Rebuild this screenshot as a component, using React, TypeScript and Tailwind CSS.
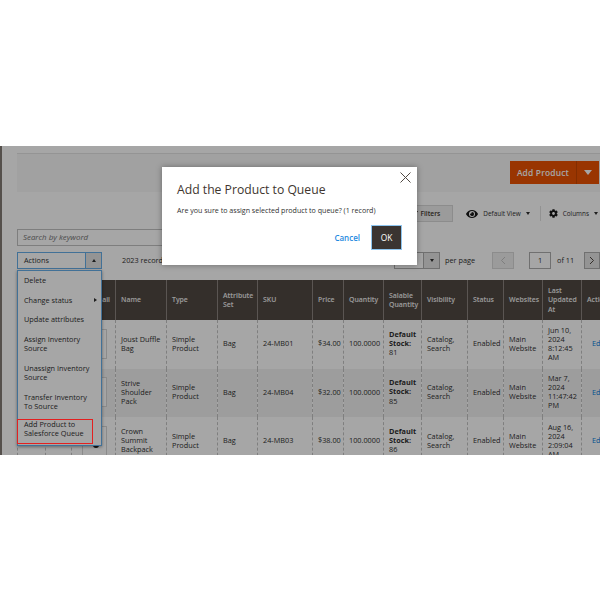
import { FaEye, FaCog, FaFilter } from "react-icons/fa";

const cols = [28, 26, 44, 51, 51, 40, 55, 31, 40, 38, 46, 36, 39, 39, 60];
const heads = ["", "", "", "Name", "Type", "Attribute Set", "SKU", "Price", "Quantity", "Salable Quantity", "Visibility", "Status", "Websites", "Last Updated At", "Action"];
const rows = [
  { name: "Joust Duffle Bag", sku: "24-MB01", price: "$34.00", stock: "81", date: "Jun 10, 2024 8:12:45 AM", h: "h-[49px]", bg: "bg-white" },
  { name: "Strive Shoulder Pack", sku: "24-MB04", price: "$32.00", stock: "85", date: "Mar 7, 2024 11:47:42 PM", h: "h-[48px]", bg: "bg-[#f2f2f2]" },
  { name: "Crown Summit Backpack", sku: "24-MB03", price: "$38.00", stock: "86", date: "Aug 16, 2024 2:09:04 AM", h: "h-[49px]", bg: "bg-white" },
];
const menu = ["Delete", "Change status", "Update attributes", "Assign Inventory Source", "Unassign Inventory Source", "Transfer Inventory To Source"];

function Td({ children, cls = "" }: { children?: React.ReactNode; cls?: string }) {
  return <td className={`overflow-hidden border-l border-dashed border-[#c4c4c4] px-[5px] pt-0 pb-[2px] align-middle ${cls}`}>{children}</td>;
}

export default function App() {
  return (
    <div className="h-[600px] bg-white pt-[146px] font-['Open_Sans',sans-serif] text-[7.3px] leading-[9px] text-[#303030]">
      <div className="relative h-[309px] overflow-hidden border-l-2 border-[#55504c] bg-white">
        <div className="pl-[15px] pt-[7px]">
          <div className="flex h-[39px] items-start justify-end border-t border-[#e3e3e3] bg-[#f8f8f8] pt-[7px]">
            <div className="mr-px flex h-[23px] items-center bg-[#eb5202] text-[8.4px] font-semibold tracking-[0.2px] text-white">
              <div className="flex h-full w-[67px] items-center justify-center border-r border-[#c94600]">Add Product</div>
              <div className="flex w-[22px] justify-center"><div className="h-0 w-0 border-x-[4px] border-t-[5px] border-x-transparent border-t-white" /></div>
            </div>
          </div>

          <div className="flex h-[37px] items-center justify-end pt-[6px] text-[6.4px] text-[#303030]">
            <div className="flex h-[17px] w-[46px] items-center justify-end gap-[2px] border border-[#d8d8d8] bg-[#eeeeee] pr-[12px] text-[6.7px] font-semibold text-[#41362f]"><FaFilter className="size-[6px]" />Filters</div>
            <FaEye className="ml-[13px] size-[12px] text-[#1a1a1a]" />
            <span className="ml-[5px]">Default View</span>
            <div className="ml-[5px] h-0 w-0 border-x-[2.5px] border-t-[3px] border-x-transparent border-t-[#303030]" />
            <div className="ml-[10px] h-[15px] w-px bg-[#e0e0e0]" />
            <FaCog className="ml-[8px] size-[9px] text-[#1a1a1a]" />
            <span className="ml-[5px]">Columns</span>
            <div className="ml-[5px] mr-[2px] h-0 w-0 border-x-[2.5px] border-t-[3px] border-x-transparent border-t-[#303030]" />
          </div>

          <div className="flex h-[17px] w-[200px] items-center border border-[#c2c2c2] bg-white pl-[5px] text-[7.9px] italic text-[#757575]">Search by keyword</div>

          <div className="mt-[6px] flex h-[17px] items-center text-[7.3px] text-[#303030]">
            <div className="flex h-full w-[85px] border border-[#66aee8]">
              <div className="flex flex-1 items-center pl-[6px]">Actions</div>
              <div className="flex w-[16px] items-center justify-center border-l border-[#66aee8] bg-[#e3e3e3]"><div className="h-0 w-0 border-x-[2.5px] border-b-[3px] border-x-transparent border-b-[#303030]" /></div>
            </div>
            <span className="ml-[20px]">2023 records found</span>
            <div className="ml-auto flex items-center">
              <div className="flex h-[17px] w-[46px] border border-[#adadad] bg-white">
                <div className="flex-1" />
                <div className="flex w-[16px] items-center justify-center border-l border-[#adadad] bg-[#e3e3e3]"><div className="h-0 w-0 border-x-[2.5px] border-t-[3px] border-x-transparent border-t-[#303030]" /></div>
              </div>
              <span className="ml-[5px] w-[47px]">per page</span>
              <div className="flex h-[17px] w-[22px] items-center justify-center border border-[#d8d8d8] bg-[#eeeeee] text-[#c2c2c2]">
                <svg width="6" height="9" viewBox="0 0 6 9" fill="none" stroke="currentColor"><path d="M5 1 1.5 4.5 5 8" /></svg>
              </div>
              <div className="ml-[15px] flex h-[17px] w-[22px] items-center justify-center border border-[#adadad] bg-white">1</div>
              <span className="ml-[6px] w-[27px]">of 11</span>
              <div className="flex h-[17px] w-[16px] items-center justify-center border border-[#adadad] bg-[#e3e3e3] text-[#514943]">
                <svg width="6" height="9" viewBox="0 0 6 9" fill="none" stroke="currentColor"><path d="M1 1 4.5 4.5 1 8" /></svg>
              </div>
            </div>
          </div>

          <table className="mt-[11px] w-[624px] table-fixed border-collapse">
            <colgroup>{cols.map((w, i) => <col key={i} style={{ width: w }} />)}</colgroup>
            <thead>
              <tr className="h-[40px] bg-[#514943] text-left text-[#f0f0f0]">
                {heads.map((h, i) => (
                  <th key={i} className="overflow-hidden border-l border-[#8a837f] px-[5px] text-[6.9px] font-semibold leading-[9.3px]">{i === 2 ? <span className="float-right">ail</span> : h}</th>
                ))}
              </tr>
            </thead>
            <tbody>
              {rows.map((r, ri) => (
                <tr key={r.sku} className={`${r.h} ${r.bg}`}>
                  <Td /><Td />
                  <Td cls="!px-[10px]">
                    <div className="relative h-[30px] w-[25px] overflow-hidden border border-[#d6d6d6] bg-white">
                      {ri === 2 && <div className="absolute left-[10px] top-[18px] h-[3px] w-[6px] rounded-b-full bg-[#222]" />}
                    </div>
                  </Td>
                  <Td>{r.name}</Td>
                  <Td>Simple Product</Td>
                  <Td>Bag</Td>
                  <Td>{r.sku}</Td>
                  <Td>{r.price}</Td>
                  <Td>100.0000</Td>
                  <Td cls="leading-[9.2px]"><b className="font-bold">Default Stock:</b><br />{r.stock}</Td>
                  <Td>Catalog, Search</Td>
                  <Td>Enabled</Td>
                  <Td>Main Website</Td>
                  <Td>{r.date}</Td>
                  <Td cls="!pl-[10px] text-[#007bdb]">Edit</Td>
                </tr>
              ))}
            </tbody>
          </table>
        </div>

        <div className="absolute left-[15px] top-[124px] w-[85px] border border-[#66aee8] bg-white text-[7.3px] leading-[9.5px] shadow-[0_1px_3px_rgba(0,0,0,.4)]">
          {menu.map((m, i) => (
            <div key={m} className="relative py-[5px] pl-[6px] pr-[10px]">
              {m}
              {i === 1 && <div className="absolute right-[4px] top-[7px] h-0 w-0 border-y-[2.5px] border-l-[3px] border-y-transparent border-l-[#303030]" />}
            </div>
          ))}
          <div className="mb-[2px] py-[3px] pb-[4px] pl-[6px] leading-[9.7px]">Add Product to Salesforce Queue</div>
        </div>

        <div className="pointer-events-none absolute inset-0 bg-black/35" />

        <div className="absolute left-[15px] top-[273px] h-[25px] w-[76px] border border-[#e32020]" />

        <div className="absolute left-[160px] top-[21px] h-[98px] w-[255px] bg-white shadow-[0_0_6px_rgba(0,0,0,.35)]">
          <svg className="absolute right-[6px] top-[5px]" width="11" height="11" viewBox="0 0 11 11" fill="none" stroke="#514943" strokeWidth="1"><path d="M.5.5l10 10M10.5.5l-10 10" /></svg>
          <div className="pl-[15px] pt-[14px] text-[12.2px] leading-[17px] text-[#41362f]">Add the Product to Queue</div>
          <div className="pl-[15px] pt-[7px] text-[7.1px] leading-[10px] text-[#303030]">Are you sure to assign selected product to queue? (1 record)</div>
          <div className="absolute bottom-[15px] right-[15px] flex items-center">
            <span className="mr-[11px] text-[8px] font-semibold text-[#1f8ae0]">Cancel</span>
            <div className="flex h-[25px] w-[31px] items-center justify-center border border-[#8ec5ef] bg-[#3a3431] text-[8.4px] font-medium text-white">OK</div>
          </div>
        </div>
      </div>
    </div>
  );
}
